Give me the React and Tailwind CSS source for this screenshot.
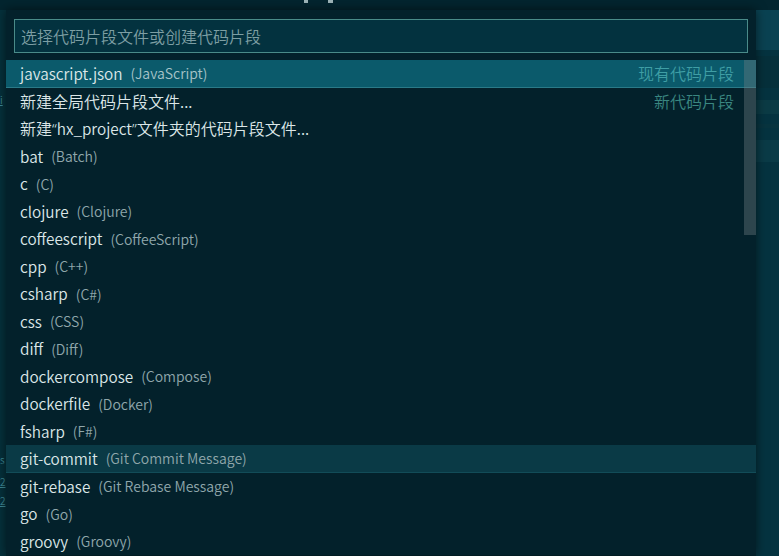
import React from 'react';

const rows = [
  { label: 'javascript.json', desc: '(JavaScript)', right: '现有代码片段', state: 'selected' },
  { label: '新建全局代码片段文件...', right: '新代码片段' },
  { label: '新建“hx_project”文件夹的代码片段文件...' },
  { label: 'bat', desc: '(Batch)' },
  { label: 'c', desc: '(C)' },
  { label: 'clojure', desc: '(Clojure)' },
  { label: 'coffeescript', desc: '(CoffeeScript)' },
  { label: 'cpp', desc: '(C++)' },
  { label: 'csharp', desc: '(C#)' },
  { label: 'css', desc: '(CSS)' },
  { label: 'diff', desc: '(Diff)' },
  { label: 'dockercompose', desc: '(Compose)' },
  { label: 'dockerfile', desc: '(Docker)' },
  { label: 'fsharp', desc: '(F#)' },
  { label: 'git-commit', desc: '(Git Commit Message)', state: 'hover' },
  { label: 'git-rebase', desc: '(Git Rebase Message)' },
  { label: 'go', desc: '(Go)' },
  { label: 'groovy', desc: '(Groovy)' },
];

// CJK runs get a slightly larger size than latin, curly quotes use a narrow latin face
const Txt = ({ text }) =>
  text.split(/([\u3000-\u9fff]+|[“”])/).filter(Boolean).map((part, i) => {
    if (/^[\u3000-\u9fff]+$/.test(part)) return <span key={i} className="text-[16px]">{part}</span>;
    if (part === '“' || part === '”') return <span key={i} className="font-['Noto_Sans']">{part}</span>;
    return <span key={i}>{part}</span>;
  });

const Row = ({ row }) => {
  const selected = row.state === 'selected';
  const hover = row.state === 'hover';
  return (
    <div
      className={`h-[27.5px] flex items-center pl-[14px] pr-[22px] leading-none ${
        selected
          ? 'bg-[#0b5a6b] border-b border-[#2a7a88]'
          : hover
          ? 'bg-[#0a3a46] border-b border-[#124c58]'
          : ''
      }`}
    >
      <span className="text-[15.3px] text-[#dce7e8] whitespace-nowrap">
        <Txt text={row.label} />
      </span>
      {row.desc && (
        <span
          className={`ml-[8px] text-[14px] whitespace-nowrap ${
            selected ? 'text-[#a6c3c8]' : 'text-[#90a7ab]'
          }`}
        >
          {row.desc}
        </span>
      )}
      {row.right && (
        <span
          className={`ml-auto text-[16px] whitespace-nowrap ${
            selected ? 'text-[#3f9ea5]' : 'text-[#3a8781]'
          }`}
        >
          {row.right}
        </span>
      )}
    </div>
  );
};

export default function App() {
  return (
    <div
      className="relative w-[779px] h-[556px] overflow-hidden bg-[#042630] flex flex-col font-[350]"
      style={{ fontFamily: '"Noto Sans CJK SC", "Noto Sans", sans-serif' }}
    >
      {/* editor behind the picker */}
      <div className="h-[10px] bg-[#03252f] flex">
        <div className="ml-[304px] w-[4px] h-[3px] bg-[#9fb6ba]" />
        <div className="ml-[20px] w-[5px] h-[3px] bg-[#9fb6ba]" />
      </div>
      <div className="flex-1 flex">
        <div className="w-[6px] bg-[#05313c] flex flex-col text-[10px] text-[#3f8a96] leading-none overflow-hidden">
          <span className="mt-[85px] underline">i</span>
          <span className="mt-[350px]">s</span>
          <span className="mt-[12px] underline">2</span>
          <span className="mt-[9px] underline">2</span>
        </div>
        <div className="flex-1" />
        <div className="w-[23px] bg-[#053340] flex flex-col">
          <div className="h-[40px] bg-[#0a4252]" />
          <div className="h-[32px] mt-[6px] bg-[#06303b]" />
          <div className="h-[14px] mt-[12px] bg-[#0b3b45]" />
          <div className="h-[4px] mt-[10px] bg-[#08343f]" />
          <div className="h-[22px] mt-[12px] bg-[#0a3b47]" />
        </div>
      </div>

      {/* quick pick widget */}
      <div className="absolute left-[6px] top-[10px] w-[750px] bg-[#03212b] shadow-[0_0_10px_rgba(0,0,0,0.55)]">
        <div className="px-[8px] pt-[9px] pb-[7px]">
          <div className="h-[34px] bg-[#03323f] border border-[#4a8b89] flex items-center px-[6px]">
            <span className="text-[16px] text-[#7d9ea3] leading-none">选择代码片段文件或创建代码片段</span>
          </div>
        </div>
        <div className="relative">
          {rows.map((r, i) => (
            <Row key={i} row={r} />
          ))}
          <div className="absolute right-0 top-0 w-[12px] h-[175px] bg-[rgba(110,125,130,0.4)]" />
        </div>
      </div>
    </div>
  );
}
